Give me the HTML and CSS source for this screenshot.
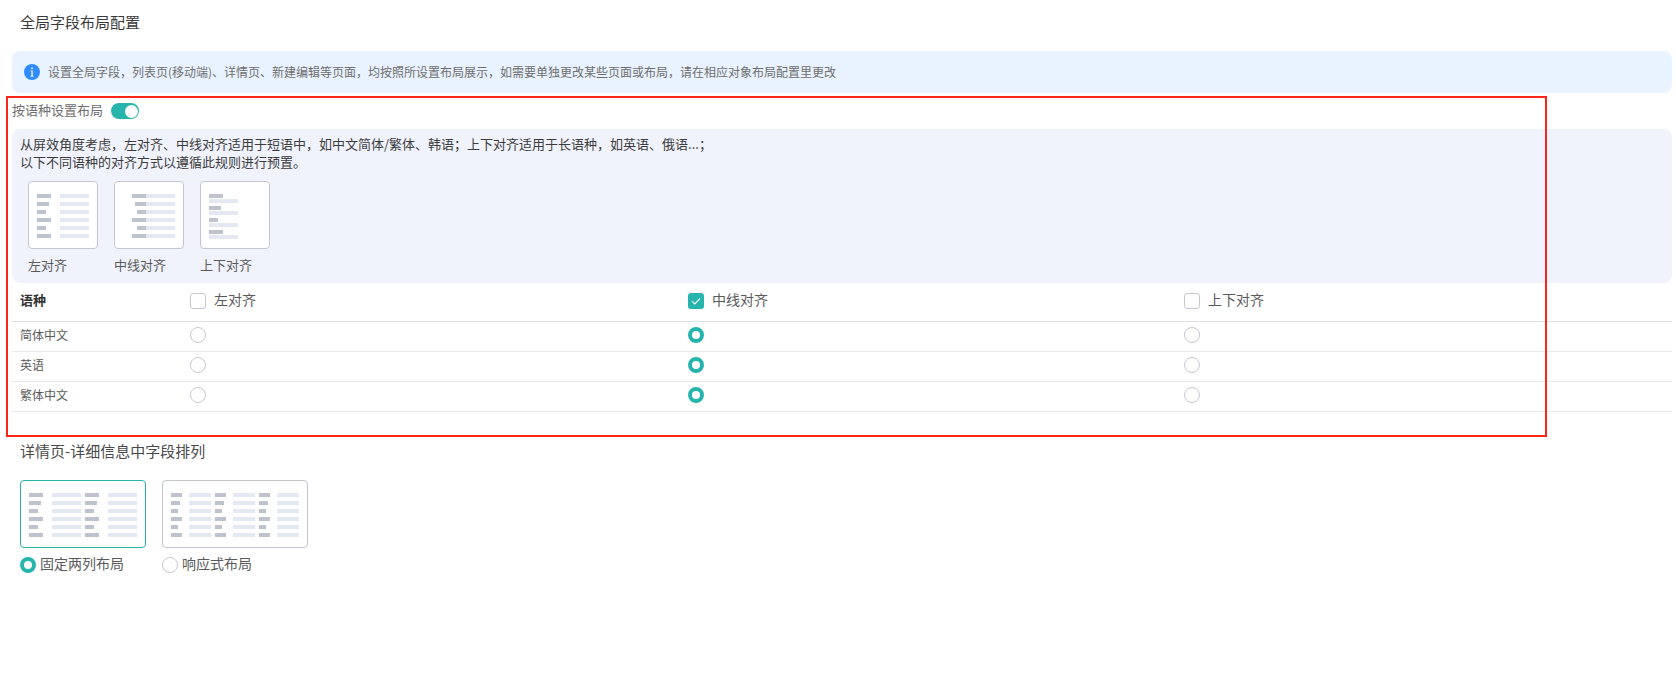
FILE: index.html
```html
<!DOCTYPE html>
<html lang="zh-CN">
<head>
<meta charset="utf-8">
<title>全局字段布局配置</title>
<link rel="stylesheet" href="styles.css">
</head>
<body>
<svg class="defs" width="0" height="0" aria-hidden="true">
  <symbol id="col-left" viewBox="0 0 52 48">
    <rect class="k" x="0" y="0" width="14" height="4"/><rect class="v" x="23" y="0" width="29" height="4"/>
    <rect class="k" x="0" y="8" width="12" height="4"/><rect class="v" x="23" y="8" width="29" height="4"/>
    <rect class="k" x="0" y="16" width="9" height="4"/><rect class="v" x="23" y="16" width="29" height="4"/>
    <rect class="k" x="0" y="24" width="14" height="4"/><rect class="v" x="23" y="24" width="29" height="4"/>
    <rect class="k" x="0" y="32" width="9" height="4"/><rect class="v" x="23" y="32" width="29" height="4"/>
    <rect class="k" x="0" y="40" width="14" height="4"/><rect class="v" x="23" y="40" width="29" height="4"/>
  </symbol>
  <symbol id="col-narrow" viewBox="0 0 40 48">
    <rect class="k" x="0" y="0" width="11" height="4"/><rect class="v" x="18" y="0" width="22" height="4"/>
    <rect class="k" x="0" y="8" width="9" height="4"/><rect class="v" x="18" y="8" width="22" height="4"/>
    <rect class="k" x="0" y="16" width="7" height="4"/><rect class="v" x="18" y="16" width="22" height="4"/>
    <rect class="k" x="0" y="24" width="11" height="4"/><rect class="v" x="18" y="24" width="22" height="4"/>
    <rect class="k" x="0" y="32" width="7" height="4"/><rect class="v" x="18" y="32" width="22" height="4"/>
    <rect class="k" x="0" y="40" width="11" height="4"/><rect class="v" x="18" y="40" width="22" height="4"/>
  </symbol>
</svg>

<main class="page">
  <h1 class="title">全局字段布局配置</h1>

  <div class="alert">
    <svg class="alert-icon" viewBox="0 0 16 16" aria-hidden="true">
      <circle cx="8" cy="8" r="8" fill="#2f8dfb"/>
      <rect x="7.3" y="3.6" width="1.4" height="1.5" fill="#fff"/>
      <path d="M6.8 6.6h1.9v5.4h.9v.8H6.5V12h.9V7.4h-.6z" fill="#fff"/>
    </svg>
    <span class="alert-text">设置全局字段，列表页(移动端)、详情页、新建编辑等页面，均按照所设置布局展示，如需要单独更改某些页面或布局，请在相应对象布局配置里更改</span>
  </div>

  <div class="switch-row">
    <span class="switch-label">按语种设置布局</span>
    <span class="switch"></span>
  </div>

  <section class="hint">
    <p>从屏效角度考虑，左对齐、中线对齐适用于短语中，如中文简体/繁体、韩语；上下对齐适用于长语种，如英语、俄语...；<br>以下不同语种的对齐方式以遵循此规则进行预置。</p>
    <div class="samples">
      <figure class="sample">
        <div class="thumb">
          <svg width="52" height="48" viewBox="0 0 52 48"><use href="#col-left"/></svg>
        </div>
        <figcaption>左对齐</figcaption>
      </figure>
      <figure class="sample">
        <div class="thumb">
          <svg width="52" height="48" viewBox="0 0 52 48">
            <rect class="k" x="9" y="0" width="14" height="4"/><rect class="v" x="23" y="0" width="29" height="4"/>
            <rect class="k" x="12" y="8" width="11" height="4"/><rect class="v" x="23" y="8" width="29" height="4"/>
            <rect class="k" x="14" y="16" width="9" height="4"/><rect class="v" x="23" y="16" width="29" height="4"/>
            <rect class="k" x="9" y="24" width="14" height="4"/><rect class="v" x="23" y="24" width="29" height="4"/>
            <rect class="k" x="14" y="32" width="9" height="4"/><rect class="v" x="23" y="32" width="29" height="4"/>
            <rect class="k" x="9" y="40" width="14" height="4"/><rect class="v" x="23" y="40" width="29" height="4"/>
          </svg>
        </div>
        <figcaption>中线对齐</figcaption>
      </figure>
      <figure class="sample">
        <div class="thumb">
          <svg width="52" height="48" viewBox="0 0 52 48">
            <rect class="k" x="0" y="0" width="14" height="4"/><rect class="v" x="0" y="5" width="29" height="4"/>
            <rect class="k" x="0" y="12" width="12" height="4"/><rect class="v" x="0" y="17" width="29" height="4"/>
            <rect class="k" x="0" y="24" width="9" height="4"/><rect class="v" x="0" y="29" width="29" height="4"/>
            <rect class="k" x="0" y="36" width="14" height="4"/><rect class="v" x="0" y="41" width="29" height="4"/>
          </svg>
        </div>
        <figcaption>上下对齐</figcaption>
      </figure>
    </div>
  </section>

  <div class="lang-table">
    <div class="row head">
      <div class="cell name">语种</div>
      <label class="cell option"><span class="check"></span><span class="option-text">左对齐</span></label>
      <label class="cell option"><span class="check on"><svg viewBox="0 0 16 16" aria-hidden="true"><path d="M4 8.2l2.8 2.8L12 5.6" fill="none" stroke="#fff" stroke-width="1.2"/></svg></span><span class="option-text">中线对齐</span></label>
      <label class="cell option"><span class="check"></span><span class="option-text">上下对齐</span></label>
    </div>
    <div class="row body">
      <div class="cell lang">简体中文</div>
      <div class="cell"><span class="radio"></span></div>
      <div class="cell"><span class="radio on"></span></div>
      <div class="cell"><span class="radio"></span></div>
    </div>
    <div class="row body">
      <div class="cell lang">英语</div>
      <div class="cell"><span class="radio"></span></div>
      <div class="cell"><span class="radio on"></span></div>
      <div class="cell"><span class="radio"></span></div>
    </div>
    <div class="row body">
      <div class="cell lang">繁体中文</div>
      <div class="cell"><span class="radio"></span></div>
      <div class="cell"><span class="radio on"></span></div>
      <div class="cell"><span class="radio"></span></div>
    </div>
  </div>

  <h2 class="subtitle">详情页-详细信息中字段排列</h2>

  <div class="layouts">
    <div class="layout">
      <div class="thumb wide selected">
        <svg width="52" height="48" viewBox="0 0 52 48"><use href="#col-left"/></svg>
        <svg width="52" height="48" viewBox="0 0 52 48"><use href="#col-left"/></svg>
      </div>
      <label class="layout-option"><span class="radio on"></span><span class="layout-text">固定两列布局</span></label>
    </div>
    <div class="layout">
      <div class="thumb wider">
        <svg width="40" height="48" viewBox="0 0 40 48"><use href="#col-narrow"/></svg>
        <svg width="40" height="48" viewBox="0 0 40 48"><use href="#col-narrow"/></svg>
        <svg width="40" height="48" viewBox="0 0 40 48"><use href="#col-narrow"/></svg>
      </div>
      <label class="layout-option"><span class="radio"></span><span class="layout-text">响应式布局</span></label>
    </div>
  </div>

  <div class="callout"></div>
</main>
</body>
</html>
```

FILE: styles.css
```css
* { box-sizing: border-box; }

html, body {
  margin: 0;
  height: 100%;
  background: #fff;
}

body {
  font-family: "Noto Sans CJK SC", "Noto Sans", sans-serif;
  color: #333;
  overflow: hidden;
}

.defs { position: absolute; }

.k { fill: #bfc3cd; }
.v { fill: #e4e8f2; }

.page {
  position: relative;
  padding: 0 4px 0 12px;
}

.title {
  margin: 0 0 7px;
  padding-left: 8px;
  font-size: 15px;
  font-weight: 400;
  line-height: 44px;
  color: #3a3a3a;
}

.alert {
  display: flex;
  align-items: center;
  gap: 8px;
  height: 42px;
  padding: 0 12px;
  border-radius: 8px;
  background: #e8f3ff;
  font-size: 12px;
  color: #6e6e6e;
}

.alert-text { padding-bottom: 2px; }

.alert-icon { width: 16px; height: 16px; flex: none; }

.switch-row {
  display: flex;
  align-items: center;
  gap: 8px;
  height: 36px;
  font-size: 13px;
  color: #6e6e6e;
}

.switch-label { padding-bottom: 4px; }

.switch {
  position: relative;
  width: 28px;
  height: 16px;
  border-radius: 8px;
  background: #26b5ad;
}

.switch::after {
  content: "";
  position: absolute;
  top: 1.5px;
  right: 1.5px;
  width: 13px;
  height: 13px;
  border-radius: 50%;
  background: #fff;
}

.hint {
  padding: 6px 8px 10px;
  border-radius: 8px;
  background: #f0f3fc;
  font-size: 13px;
  line-height: 18px;
  color: #3c3c3c;
}

.hint p { margin: 0; }

.samples {
  display: flex;
  gap: 16px;
  margin-top: 10px;
  padding-left: 8px;
}

.sample { margin: 0; }

.sample figcaption {
  margin-top: 8px;
  line-height: 16px;
  color: #5a5a5a;
}

.thumb {
  display: flex;
  gap: 4px;
  width: 70px;
  height: 68px;
  padding: 12px 8px 0;
  border: 1px solid #c3c6d0;
  border-radius: 4px;
  background: #fff;
}

.thumb svg { display: block; flex: none; }

.thumb.wide { width: 126px; }
.thumb.wider { width: 146px; }
.thumb.selected { border-color: #26b5ad; }

.row {
  display: grid;
  grid-template-columns: 170px 498px 496px 1fr;
  align-items: center;
  border-bottom: 1px solid #e8e9ec;
}

.row.head {
  height: 39px;
  padding-bottom: 2px;
  border-bottom-color: #dfe0e4;
  font-size: 14px;
}

.row.body {
  height: 30px;
  padding-bottom: 3px;
  font-size: 12px;
  color: #5a5a5a;
}

.cell { padding: 0 8px; }

.cell.lang { padding-bottom: 2px; }

.name {
  padding-bottom: 4px;
  font-size: 13px;
  font-weight: 700;
  color: #333;
}

.option {
  display: flex;
  align-items: center;
  gap: 8px;
  color: #5a5a5a;
}

.option-text { padding-bottom: 4px; }

.check {
  flex: none;
  display: block;
  width: 16px;
  height: 16px;
  border: 1px solid #c6c8d1;
  border-radius: 3px;
  background: #fff;
}

.check.on {
  border: 0;
  background: #26b5ad;
}

.check svg { display: block; width: 16px; height: 16px; }

.radio {
  display: block;
  flex: none;
  width: 16px;
  height: 16px;
  border: 1px solid #c6c8d1;
  border-radius: 50%;
  background: #fff;
}

.radio.on { border: 4px solid #26b5ad; }

.subtitle {
  margin: 27px 0 17px;
  padding-left: 8px;
  font-size: 15px;
  font-weight: 400;
  line-height: 24px;
  color: #4a4a4a;
}

.layouts {
  display: flex;
  gap: 16px;
  padding-left: 8px;
}

.layout-option {
  display: flex;
  align-items: center;
  gap: 4px;
  height: 22px;
  margin-top: 6px;
  font-size: 14px;
  color: #5a5a5a;
}

.layout-text { padding-bottom: 4px; }

.callout {
  position: absolute;
  left: 6px;
  top: 96px;
  width: 1541px;
  height: 341px;
  border: 2px solid #fb2418;
  pointer-events: none;
}
```
